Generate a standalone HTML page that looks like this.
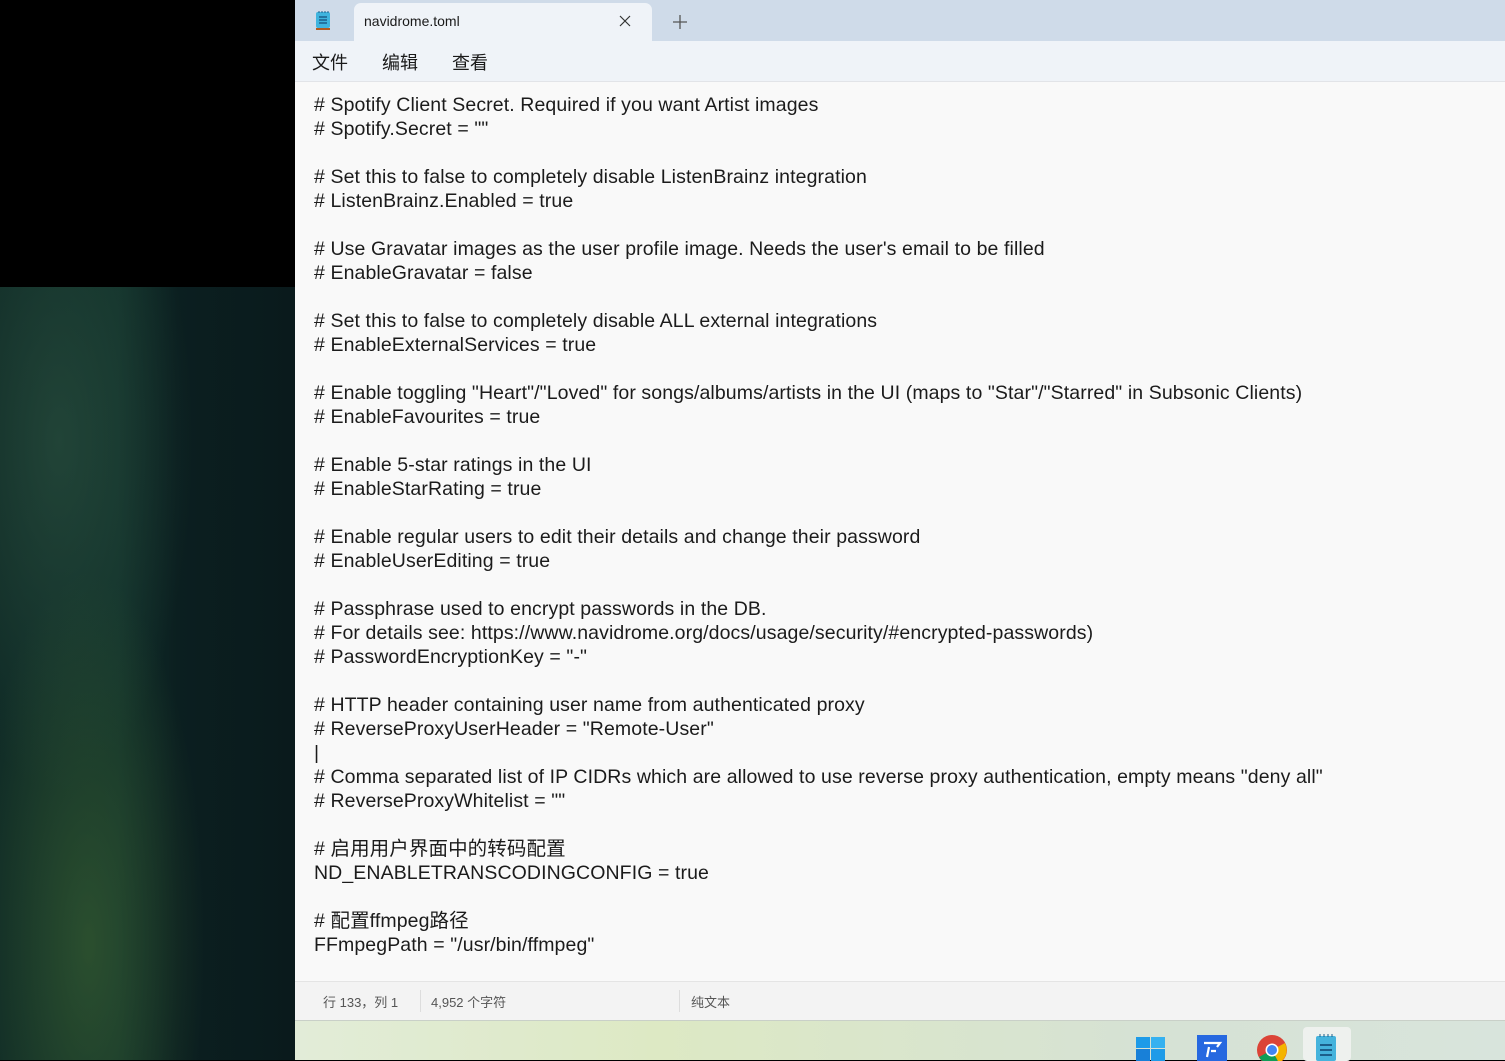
<!DOCTYPE html>
<html><head><meta charset="utf-8">
<style>
*{margin:0;padding:0;box-sizing:border-box}
body{width:1505px;height:1060px;overflow:hidden;position:relative;background:#000;font-family:"Liberation Sans","Noto Sans CJK SC",sans-serif}
#bg{position:absolute;left:0;top:287px;width:295px;height:773px;
background:
radial-gradient(ellipse at 30% 85%,rgba(60,100,50,.6),transparent 40%),
radial-gradient(ellipse at 20% 20%,rgba(50,90,70,.5),transparent 40%),
linear-gradient(90deg,#0f2a26 0%,#11302a 40%,#0b1f20 60%,#0a1a1c 100%);}
#win{position:absolute;left:295px;top:0;width:1210px;height:1020px;background:#f9f9f9}
#tabbar{position:absolute;left:0;top:0;width:1210px;height:41px;background:#cfdbe9}
#tab{position:absolute;left:59px;top:3px;width:298px;height:38px;background:#eff3f8;border-radius:7px 7px 0 0;font-size:14px;color:#1a1a1a}
#menu{position:absolute;left:0;top:41px;width:1210px;height:41px;background:#eff3f8;border-bottom:1px solid #e2e4e8;font-size:18px;color:#1a1a1a}
#menu span{position:absolute;top:8px}
#text{position:absolute;left:19px;top:93px;font-size:19.5px;letter-spacing:0.1px;line-height:24px;color:#1b1b1b;white-space:pre}
#status{position:absolute;left:0;top:981px;width:1210px;height:39px;background:#f3f3f3;border-top:1px solid #e4e4e4;font-size:13px;color:#555}
#task{position:absolute;left:295px;top:1020px;width:1210px;height:40px;background:linear-gradient(90deg,#e2ecd8,#dde9c4 30%,#d6e2d4 70%,#d8e4dc);border-top:1px solid #c9d0c8}
</style></head><body>
<div id="bg"></div>
<div id="win">
 <div id="tabbar">
  <svg style="position:absolute;left:20px;top:10px" width="17" height="21" viewBox="0 0 17 21"><rect x="1" y="2" width="14" height="16" rx="2" fill="#3fb4de"/><rect x="1" y="18" width="14" height="2" fill="#b35a1f"/><path d="M4 7h8M4 10h8M4 13h8" stroke="#1c5f8a" stroke-width="1.4"/><path d="M4 1v2M7 1v2M10 1v2M13 1v2" stroke="#1c5f8a"/></svg>
  <div id="tab"><span style="position:absolute;left:10px;top:10px">navidrome.toml</span>
   <svg style="position:absolute;left:265px;top:12px" width="12" height="12"><path d="M1 1L11 11M11 1L1 11" stroke="#333" stroke-width="1.2"/></svg></div>
  <svg style="position:absolute;left:378px;top:15px" width="14" height="14"><path d="M7 0v14M0 7h14" stroke="#555" stroke-width="1.3"/></svg>
 </div>
 <div id="menu"><span style="left:17px">文件</span><span style="left:87px">编辑</span><span style="left:157px">查看</span></div>
 <div id="text"># Spotify Client Secret. Required if you want Artist images
# Spotify.Secret = ""

# Set this to false to completely disable ListenBrainz integration
# ListenBrainz.Enabled = true

# Use Gravatar images as the user profile image. Needs the user's email to be filled
# EnableGravatar = false

# Set this to false to completely disable ALL external integrations
# EnableExternalServices = true

# Enable toggling "Heart"/"Loved" for songs/albums/artists in the UI (maps to "Star"/"Starred" in Subsonic Clients)
# EnableFavourites = true

# Enable 5-star ratings in the UI
# EnableStarRating = true

# Enable regular users to edit their details and change their password
# EnableUserEditing = true

# Passphrase used to encrypt passwords in the DB.
# For details see: https://www.navidrome.org/docs/usage/security/#encrypted-passwords)
# PasswordEncryptionKey = "-"

# HTTP header containing user name from authenticated proxy
# ReverseProxyUserHeader = "Remote-User"
|
# Comma separated list of IP CIDRs which are allowed to use reverse proxy authentication, empty means "deny all"
# ReverseProxyWhitelist = ""

# 启用用户界面中的转码配置
ND_ENABLETRANSCODINGCONFIG = true

# 配置ffmpeg路径
FFmpegPath = "/usr/bin/ffmpeg"</div>
 <div id="status">
  <span style="position:absolute;left:28px;top:10px">行 133，列 1</span>
  <div style="position:absolute;left:125px;top:8px;width:1px;height:22px;background:#ddd"></div>
  <span style="position:absolute;left:136px;top:10px">4,952 个字符</span>
  <div style="position:absolute;left:384px;top:8px;width:1px;height:22px;background:#ddd"></div>
  <span style="position:absolute;left:396px;top:10px">纯文本</span>
 </div>
</div>
<div id="task">
 <svg style="position:absolute;left:841px;top:16px" width="30" height="24"><rect x="0" y="0" width="14" height="11" fill="#1e9be8"/><rect x="15" y="0" width="14" height="11" fill="#35b1f0"/><rect x="0" y="12" width="14" height="12" fill="#1880d8"/><rect x="15" y="12" width="14" height="12" fill="#1e9be8"/></svg>
 <svg style="position:absolute;left:902px;top:14px" width="30" height="26"><rect width="30" height="26" fill="#2668e0"/><path d="M7 8h16l-3 4M12 12l-2 10M14 16h5" stroke="#fff" stroke-width="2.2" fill="none"/></svg>
 <svg style="position:absolute;left:962px;top:14px" width="30" height="26"><circle cx="15" cy="15" r="15" fill="#db4437"/><path d="M15 15L2 22A15 15 0 0 0 22 28Z" fill="#0f9d58"/><path d="M15 15L28 8A15 15 0 0 1 22 28Z" fill="#f4b400"/><circle cx="15" cy="15" r="6.5" fill="#fff"/><circle cx="15" cy="15" r="5" fill="#4285f4"/></svg>
 <div style="position:absolute;left:1008px;top:6px;width:48px;height:34px;background:#eef1ee;border-radius:4px"></div>
 <svg style="position:absolute;left:1020px;top:12px" width="22" height="28"><rect x="1" y="3" width="20" height="25" rx="2" fill="#45b3dc"/><path d="M5 12h12M5 17h12M5 22h12" stroke="#1c5f8a" stroke-width="2"/><path d="M5 1v3M9 1v3M13 1v3M17 1v3" stroke="#1c5f8a"/></svg>
</div>
</body></html>
